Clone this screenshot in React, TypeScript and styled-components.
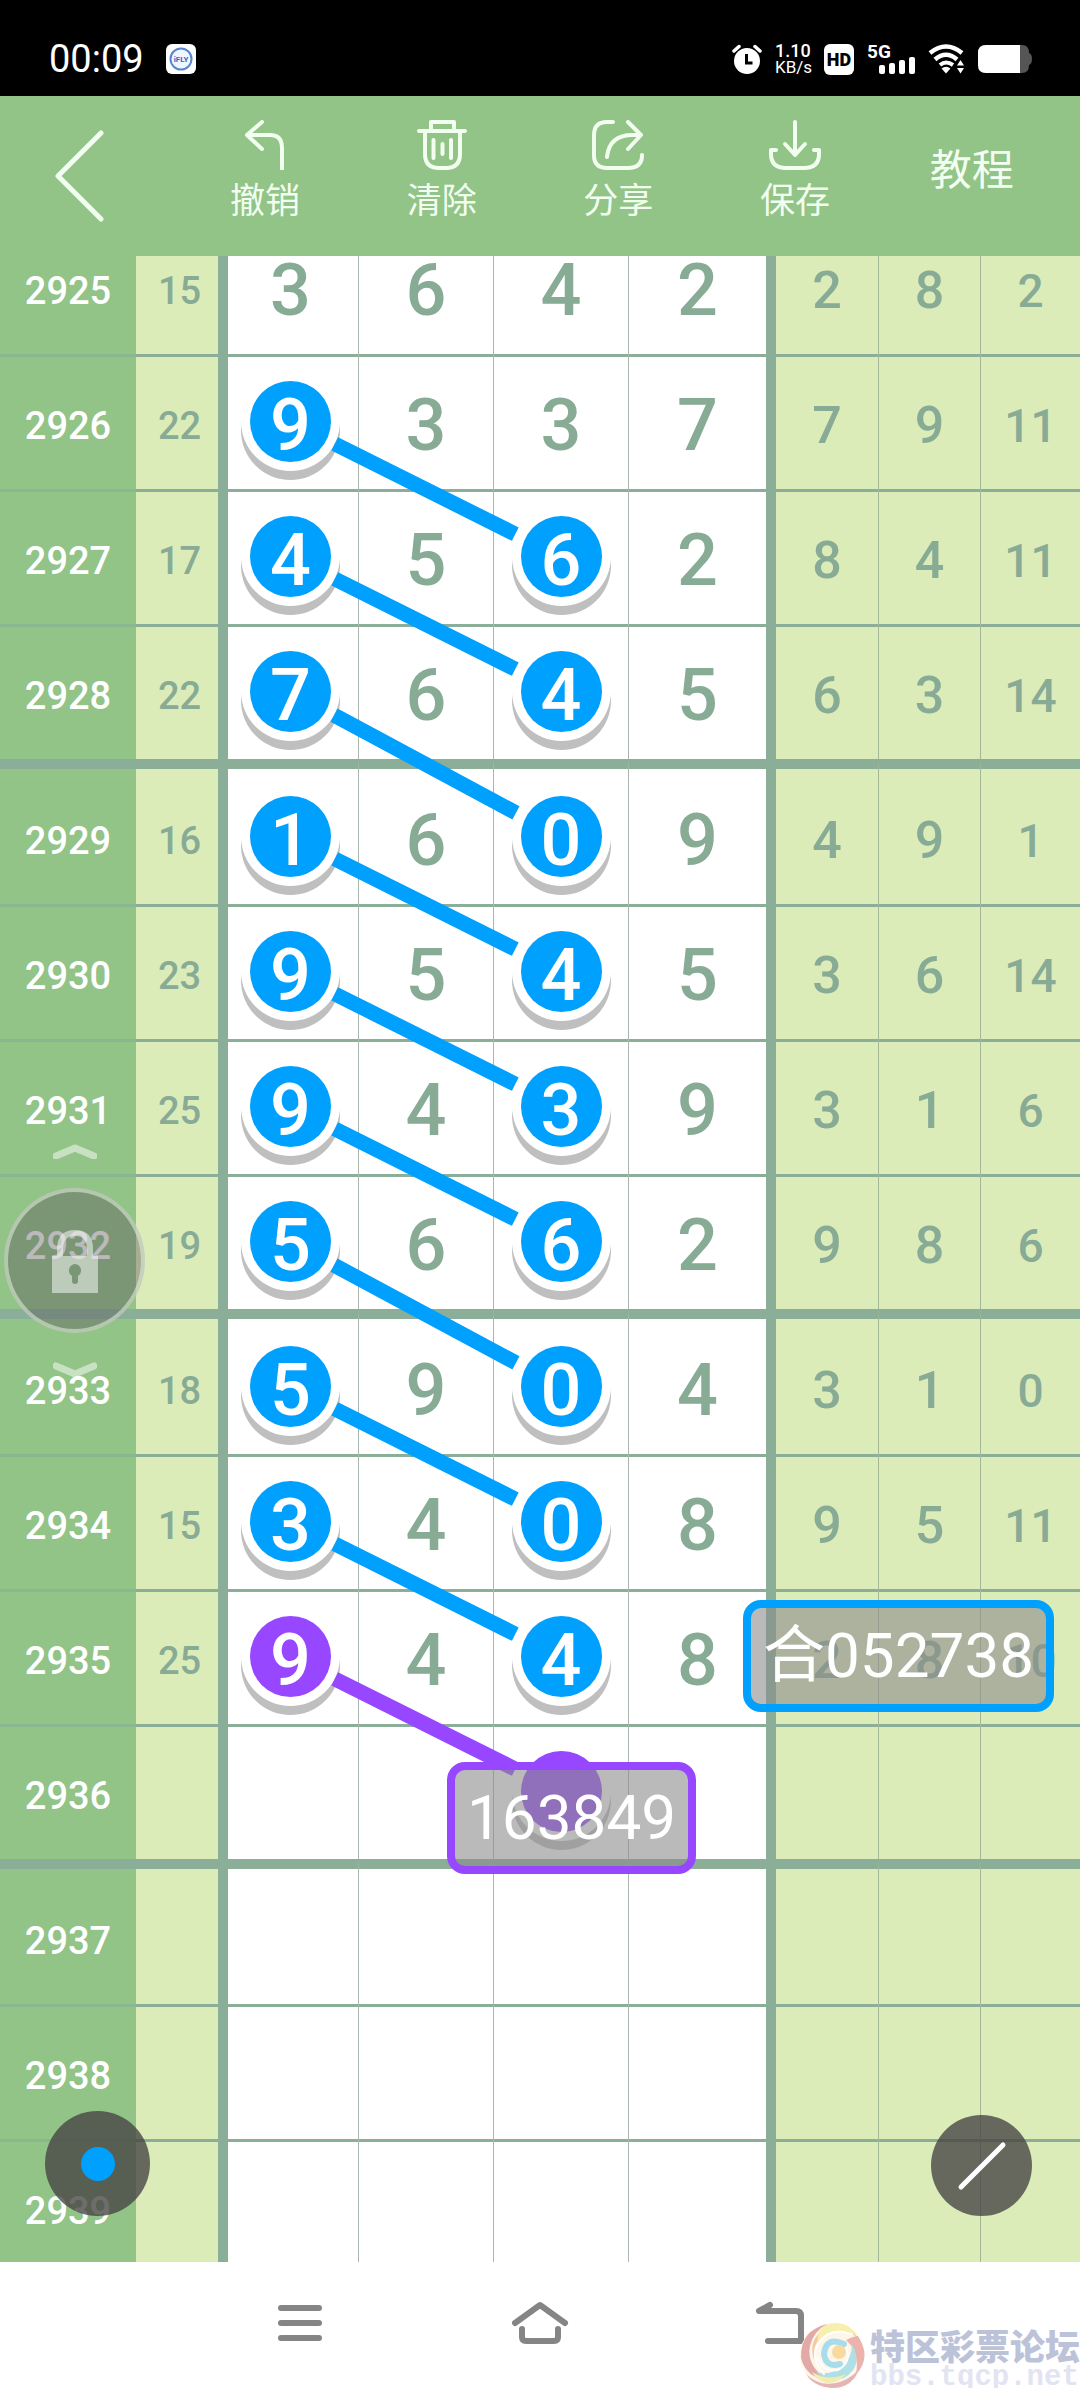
import React, { useLayoutEffect, useRef } from "react";
import styled, { createGlobalStyle, css } from "styled-components";

const BLUE = "#00a0ff";
const PURPLE = "#9747ff";
const LINE = "#8aae98";

const Global = createGlobalStyle`
  *, *::before, *::after { box-sizing: border-box; }
  body {
    margin: 0;
    background: #fff;
    font-family: Roboto, "Noto Sans CJK SC", sans-serif;
  }
  button { border: 0; padding: 0; background: none; font: inherit; color: inherit; }
`;

const Page = styled.div`
  height: 100vh;
  display: flex;
  flex-direction: column;
  overflow: hidden;
`;

/* ---------- status bar ---------- */

const StatusBar = styled.header`
  flex: none;
  height: 96px;
  padding: 22px 48px 0 49px;
  display: flex;
  align-items: center;
  justify-content: space-between;
  background: #000;
  color: #fff;
`;

const StatusSide = styled.div<{ $gap: number }>`
  display: flex;
  align-items: center;
  gap: ${(p) => p.$gap}px;
`;

const Clock = styled.time`
  font-size: 38px;
  line-height: 40px;
`;

const NetSpeed = styled.div`
  width: 36px;
  font-size: 18px;
  font-weight: 500;
  line-height: 17px;

  small {
    display: block;
    font-size: 17px;
    font-weight: 400;
    white-space: nowrap;
  }
`;

const HdBadge = styled.span`
  width: 30px;
  height: 31px;
  display: grid;
  place-items: center;
  border-radius: 6px;
  background: #fff;
  color: #000;
  font-size: 18px;
  font-weight: 900;
`;

const Signal = styled.div`
  width: 48px;
  height: 30px;
  display: grid;
  grid-template-columns: 21px 1fr;
  font-size: 19px;
  font-weight: 700;
  line-height: 16px;

  svg { grid-area: 1 / 1 / 2 / 3; }
  span { grid-area: 1 / 1; }
`;

/* ---------- toolbar ---------- */

const Toolbar = styled.nav`
  flex: none;
  height: 160px;
  padding-right: 20px;
  display: grid;
  grid-template-columns: repeat(6, 1fr);
  background: #92c387;
  color: #f2fff0;
`;

const BackButton = styled.button`
  display: flex;
  align-items: center;
  padding: 0 0 0 54px;
`;

const ToolButton = styled.button`
  display: flex;
  flex-direction: column;
  align-items: center;
  gap: 12px;
  padding-top: 24px;
  font-size: 35px;
  line-height: 40px;
`;

const TextButton = styled.button`
  padding-bottom: 20px;
  font-size: 42px;
`;

const Stroke = styled.svg<{ $w: number }>`
  display: block;
  fill: none;
  stroke: currentColor;
  stroke-width: ${(p) => p.$w};
  stroke-linecap: round;
  stroke-linejoin: round;
`;

/* ---------- trend chart ---------- */

const ChartArea = styled.main`
  flex: 1;
  min-height: 0;
  position: relative;
`;

const Scroller = styled.div`
  height: 100%;
  overflow: hidden auto;
  scrollbar-width: none;
`;

const Canvas = styled.div`
  position: relative;
`;

const Grid = styled.table`
  width: 100%;
  table-layout: fixed;
  border-collapse: separate;
  border-spacing: 0;
  color: #87ab95;
  font-weight: 500;
  text-align: center;
  line-height: 1;
`;

const rowEdge = css<{ $first: boolean }>`
  height: ${(p) => (p.$first ? 145 : 135)}px;
  border-top: ${(p) => (p.$first ? 10 : 0)}px solid ${LINE};
`;

const hair = (first: boolean) => (first ? "inset 0 0 0 0 transparent" : `inset 0 3px 0 ${LINE}`);

const Issue = styled.th<{ $first: boolean }>`
  ${rowEdge}
  padding: 8px 0 0;
  background: #92c387;
  box-shadow: ${(p) => (p.$first ? "none" : "inset 0 3px 0 #8bb790")};
  color: #fff;
  font-size: 38px;
  font-weight: 500;
`;

const Sum = styled.td<{ $first: boolean }>`
  ${rowEdge}
  padding: 8px 0 0;
  background: #dcecb9;
  box-shadow: inset -5px 0 0 ${LINE}, ${(p) => hair(p.$first)};
  font-size: 38px;
`;

const Digit = styled.td<{ $first: boolean; $edge?: "start" | "end"; $ball: boolean }>`
  ${rowEdge}
  padding: ${(p) => (p.$ball ? 0 : 8)}px 0 0;
  background: #fff;
  border-left: ${(p) => (p.$edge === "start" ? 0 : 1)}px solid #a9b8ae;
  border-right: ${(p) => (p.$edge === "end" ? 5 : 0)}px solid ${LINE};
  box-shadow: ${(p) => (p.$edge === "start" ? `inset 5px 0 0 ${LINE}, ` : "")}${(p) => hair(p.$first)};
  font-size: 72px;
`;

const Stat = styled.td<{ $first: boolean; $edge?: "start"; $size: number }>`
  ${rowEdge}
  padding: 8px 0 0;
  background: #dcecb9;
  border-left: ${(p) => (p.$edge === "start" ? 5 : 1)}px solid ${(p) => (p.$edge === "start" ? LINE : "#a3b896")};
  box-shadow: ${(p) => hair(p.$first)};
  font-size: ${(p) => p.$size}px;
`;

const Ball = styled.span<{ $color: string }>`
  width: 81px;
  height: 81px;
  margin: 0 auto;
  padding-top: 9px;
  display: flex;
  align-items: center;
  justify-content: center;
  border-radius: 50%;
  background: ${(p) => p.$color};
  box-shadow: 0 0 0 9px #fff, 0 9px 0 9px #c0bfbf;
  color: #fff;
`;

const Links = styled.svg`
  position: absolute;
  inset: 0;
  width: 100%;
  height: 100%;
  pointer-events: none;
`;

const Note = styled.div<{ $color: string; $x: number; $y: number }>`
  position: absolute;
  left: calc(100% * ${(p) => p.$x} / 1080);
  top: ${(p) => p.$y}px;
  padding: 12px;
  border: 8px solid ${(p) => p.$color};
  border-radius: 18px;
  background: rgba(140, 140, 140, 0.6);
  color: #fff;
  font-size: 62px;
  line-height: 72px;
  white-space: nowrap;
`;

/* ---------- floating controls ---------- */

const LockPad = styled.div`
  position: absolute;
  left: 4px;
  bottom: 885px;
  width: 141px;
  display: flex;
  flex-direction: column;
  align-items: center;
  gap: 29px;
  color: rgba(255, 255, 255, 0.5);
`;

const LockButton = styled.button`
  width: 141px;
  height: 145px;
  display: flex;
  align-items: center;
  justify-content: center;
  border: 4px solid rgba(220, 235, 215, 0.6);
  border-radius: 50%;
  background: rgba(92, 88, 92, 0.42);
`;

const Fab = styled.button<{ $side: "left" | "right"; $size: number }>`
  position: absolute;
  ${(p) => p.$side}: ${(p) => (p.$side === "left" ? 45 : 48)}px;
  bottom: 46px;
  width: ${(p) => p.$size}px;
  height: ${(p) => p.$size}px;
  display: flex;
  align-items: center;
  justify-content: center;
  border-radius: 50%;
  background: rgba(70, 66, 66, 0.78);
  color: #fff;
`;

const Dot = styled.span`
  width: 34px;
  height: 34px;
  border-radius: 50%;
  background: ${BLUE};
`;

/* ---------- system navigation ---------- */

const SystemNav = styled.footer`
  flex: none;
  position: relative;
  height: 126px;
  padding: 0 calc(100% / 6) 4px;
  display: grid;
  grid-template-columns: repeat(3, 1fr);
  background: #fff;
  color: #858585;
`;

const NavButton = styled.button`
  display: flex;
  align-items: center;
  justify-content: center;
`;

const Watermark = styled.div`
  position: absolute;
  right: 0;
  bottom: 0;
  display: flex;
  align-items: flex-end;
  gap: 4px;
  color: #bcc3d9;
`;

const ForumName = styled.div`
  font-size: 35px;
  font-weight: 900;
  line-height: 38px;
  white-space: nowrap;
`;

const ForumUrl = styled.div`
  color: #e2e3f3;
  font-family: "Liberation Mono", monospace;
  font-size: 29px;
  font-weight: 700;
  line-height: 20px;
`;

/* ---------- data ---------- */

type Row = {
  issue: number;
  sum?: number;
  digits?: number[];
  stats?: number[];
  marks?: Record<number, string>;
};

const both = { 0: BLUE, 2: BLUE };

const rows: Row[] = [
  { issue: 2925, sum: 15, digits: [3, 6, 4, 2], stats: [2, 8, 2] },
  { issue: 2926, sum: 22, digits: [9, 3, 3, 7], stats: [7, 9, 11], marks: { 0: BLUE } },
  { issue: 2927, sum: 17, digits: [4, 5, 6, 2], stats: [8, 4, 11], marks: both },
  { issue: 2928, sum: 22, digits: [7, 6, 4, 5], stats: [6, 3, 14], marks: both },
  { issue: 2929, sum: 16, digits: [1, 6, 0, 9], stats: [4, 9, 1], marks: both },
  { issue: 2930, sum: 23, digits: [9, 5, 4, 5], stats: [3, 6, 14], marks: both },
  { issue: 2931, sum: 25, digits: [9, 4, 3, 9], stats: [3, 1, 6], marks: both },
  { issue: 2932, sum: 19, digits: [5, 6, 6, 2], stats: [9, 8, 6], marks: both },
  { issue: 2933, sum: 18, digits: [5, 9, 0, 4], stats: [3, 1, 0], marks: both },
  { issue: 2934, sum: 15, digits: [3, 4, 0, 8], stats: [9, 5, 11], marks: both },
  { issue: 2935, sum: 25, digits: [9, 4, 4, 8], stats: [2, 8, 10], marks: { 0: PURPLE, 2: BLUE } },
  { issue: 2936, marks: { 2: PURPLE } },
  { issue: 2937 },
  { issue: 2938 },
  { issue: 2939 },
];

const columns = [136, 87, 135, 135, 135, 143, 107, 102, 100];
const ROW = 135;
const GROUP_BAR = 10;
const HEIGHT = rows.length * ROW + Math.ceil(rows.length / 4) * GROUP_BAR;

const centerY = (i: number) => i * ROW + (Math.floor(i / 4) + 1) * GROUP_BAR + ROW / 2;

// Each marked first digit is tied to the third digit of the next draw.
const links = rows.slice(0, -1).flatMap((row, i) => {
  const color = row.marks?.[0];
  if (!color) return [];
  const from = { x: 290, y: centerY(i) };
  const to = { x: 560, y: centerY(i + 1) };
  const len = Math.hypot(to.x - from.x, to.y - from.y);
  const ux = ((to.x - from.x) / len) * 50;
  const uy = ((to.y - from.y) / len) * 50;
  return [{ color, x1: from.x + ux, y1: from.y + uy, x2: to.x - ux, y2: to.y - uy }];
});

/* ---------- parts ---------- */

function StatusIcons() {
  return (
    <StatusSide $gap={13}>
      <svg width="30" height="30" viewBox="0 0 30 30" aria-label="闹钟">
        <circle cx="15" cy="17" r="13" fill="#fff" />
        <path d="M2 7 7 2.500M28 7 23 2.500" stroke="#fff" strokeWidth="3.500" strokeLinecap="round" />
        <path d="M14.500 10v9h6" stroke="#000" strokeWidth="3" fill="none" />
      </svg>
      <NetSpeed>
        1.10<small>KB/s</small>
      </NetSpeed>
      <HdBadge>HD</HdBadge>
      <Signal>
        <span>5G</span>
        <svg width="48" height="30" viewBox="0 0 48 30" fill="#fff" aria-hidden="true">
          <rect x="12" y="21" width="6" height="9" rx="2" />
          <rect x="22" y="19" width="6" height="11" rx="2" />
          <rect x="32" y="16" width="6" height="14" rx="2" />
          <rect x="42" y="13" width="6" height="17" rx="2" />
        </svg>
      </Signal>
      <svg width="37" height="30" viewBox="0 0 37 30" fill="none" stroke="#fff" aria-label="Wi-Fi">
        <path d="M2 9Q18 -4 34 9" strokeWidth="4.500" />
        <path d="M7 15.500Q18 6 29 15.500" strokeWidth="4.500" />
        <path d="M12 21Q18 16 25 21" strokeWidth="4" />
        <path d="M13.500 24.500Q18 21 22.500 24.500L18 29.500z" fill="#fff" stroke="none" />
        <path d="M29 21.500 32.500 16 36 21.500zM29 24 32.500 29.500 36 24z" fill="#fff" stroke="none" />
      </svg>
      <svg width="54" height="28" viewBox="0 0 54 28" aria-label="电量">
        <path d="M8 0H44Q51 0 51 8Q54 9 54 14Q54 19 51 20Q51 28 44 28H8Q0 28 0 20V8Q0 0 8 0z" fill="#555" />
        <path d="M8 0H42V28H8Q0 28 0 20V8Q0 0 8 0z" fill="#fff" />
      </svg>
    </StatusSide>
  );
}

function Tools() {
  return (
    <Toolbar>
      <BackButton aria-label="返回">
        <Stroke $w={5} width="50" height="92" viewBox="0 0 50 92">
          <path d="M47 3 4 46 47 89" />
        </Stroke>
      </BackButton>
      <ToolButton>
        <Stroke $w={4} width="50" height="50" viewBox="0 0 50 50">
          <path d="M22 2 7 15 22 29M7 15H30Q42 15 42 28V49" />
        </Stroke>
        撤销
      </ToolButton>
      <ToolButton>
        <Stroke $w={4} width="50" height="50" viewBox="0 0 50 50">
          <path d="M2 11H48M14 11V2H37V11M8 11V34Q8 48 22 48H29Q43 48 43 34V11M16.500 20V38M25.500 24V34M34 20V38" />
        </Stroke>
        清除
      </ToolButton>
      <ToolButton>
        <Stroke $w={4} width="52" height="50" viewBox="0 0 52 50">
          <path d="M21 2H15Q2 2 2 15V35Q2 48 15 48H36Q50 48 50 35M15 37Q17 15 41 15H49M36 2 49 15 36 29" />
        </Stroke>
        分享
      </ToolButton>
      <ToolButton>
        <Stroke $w={4} width="52" height="50" viewBox="0 0 52 50">
          <path d="M26 2V34M16 24 26 35 36 24M7 30H2V34Q2 48 17 48H35Q50 48 50 34V30H45" />
        </Stroke>
        保存
      </ToolButton>
      <TextButton>教程</TextButton>
    </Toolbar>
  );
}

function TrendRow({ row, first }: { row: Row; first: boolean }) {
  return (
    <tr>
      <Issue scope="row" $first={first}>{row.issue}</Issue>
      <Sum $first={first}>{row.sum}</Sum>
      {[0, 1, 2, 3].map((i) => {
        const mark = row.marks?.[i];
        return (
          <Digit
            key={i}
            $first={first}
            $ball={Boolean(mark)}
            $edge={i === 0 ? "start" : i === 3 ? "end" : undefined}
          >
            {mark ? <Ball $color={mark}>{row.digits?.[i]}</Ball> : row.digits?.[i]}
          </Digit>
        );
      })}
      {[0, 1, 2].map((i) => (
        <Stat key={i} $first={first} $edge={i === 0 ? "start" : undefined} $size={i === 2 ? 46 : 52}>
          {row.stats?.[i]}
        </Stat>
      ))}
    </tr>
  );
}

export default function App() {
  const scroller = useRef<HTMLDivElement>(null);

  useLayoutEffect(() => {
    if (scroller.current) scroller.current.scrollTop = 47;
  }, []);

  return (
    <Page>
      <Global />
      <StatusBar>
        <StatusSide $gap={22}>
          <Clock>00:09</Clock>
          <svg width="30" height="30" viewBox="0 0 30 30" aria-label="iFLY">
            <rect width="30" height="30" rx="6" fill="#fff" />
            <circle cx="15" cy="15" r="10.500" fill="#eef6ff" stroke="#5b86cf" strokeWidth="2" />
            <text x="15" y="18" textAnchor="middle" fontSize="8" fontWeight="700" fill="#3f63c4">iFLY</text>
          </svg>
        </StatusSide>
        <StatusIcons />
      </StatusBar>

      <Tools />

      <ChartArea>
        <Scroller ref={scroller}>
          <Canvas>
            <Grid>
              <colgroup>
                {columns.map((w, i) => (
                  <col key={i} style={{ width: w }} />
                ))}
              </colgroup>
              <tbody>
                {rows.map((row, i) => (
                  <TrendRow key={row.issue} row={row} first={i % 4 === 0} />
                ))}
              </tbody>
            </Grid>
            <Links viewBox={`0 0 1080 ${HEIGHT}`} preserveAspectRatio="none" aria-hidden="true">
              {links.map(({ color, ...line }, i) => (
                <line key={i} {...line} stroke={color} strokeWidth="15" />
              ))}
            </Links>
            <Note $color={BLUE} $x={743} $y={1391}>合052738</Note>
            <Note $color={PURPLE} $x={447} $y={1553}>163849</Note>
          </Canvas>
        </Scroller>

        <LockPad>
          <Stroke $w={7} width="44" height="15" viewBox="0 0 44 15">
            <path d="M3 12 22 4 41 12" />
          </Stroke>
          <LockButton aria-label="锁定">
            <svg width="46" height="64" viewBox="0 0 46 64">
              <path d="M8 27V20Q8 4 23 4Q38 4 38 20V27" fill="none" stroke="currentColor" strokeWidth="6" />
              <path
                fillRule="evenodd"
                fill="currentColor"
                d="M0 27H46V64H0zM23 35A6.500 6.500 0 0 0 20 47V52Q20 55 23 55Q26 55 26 52V47A6.500 6.500 0 0 0 23 35z"
              />
            </svg>
          </LockButton>
          <Stroke $w={7} width="44" height="15" viewBox="0 0 44 15">
            <path d="M3 4 22 12 41 4" />
          </Stroke>
        </LockPad>

        <Fab $side="left" $size={105} aria-label="颜色">
          <Dot />
        </Fab>
        <Fab $side="right" $size={101} aria-label="画线">
          <Stroke $w={5} width="50" height="50" viewBox="0 0 50 50">
            <path d="M4 46 46 4" />
          </Stroke>
        </Fab>
      </ChartArea>

      <SystemNav>
        <NavButton aria-label="菜单">
          <Stroke $w={6} width="46" height="38" viewBox="0 0 46 38">
            <path d="M4 4H42M4 19H42M4 34H42" />
          </Stroke>
        </NavButton>
        <NavButton aria-label="主页">
          <Stroke $w={6} width="58" height="44" viewBox="0 0 58 44">
            <path d="M4 22 29 4 54 22M11 28V36Q11 40 15 40H43Q47 40 47 36V28" />
          </Stroke>
        </NavButton>
        <NavButton aria-label="返回">
          <Stroke $w={6} width="50" height="44" viewBox="0 0 50 44">
            <path d="M15 4 4 10H41Q46 10 46 15V40H13" />
          </Stroke>
        </NavButton>
        <Watermark>
          <svg width="68" height="66" viewBox="0 0 68 66" fill="none" strokeLinecap="round" aria-hidden="true">
            <circle cx="34" cy="33" r="32" fill="#fff6ea" />
            <path d="M30 2Q2 8 3 36Q8 56 30 58Q8 44 12 24Q16 8 30 2z" fill="#e3a9a9" />
            <path d="M24 8Q44 -6 60 16Q42 2 22 16Q12 28 18 42Q8 22 24 8z" fill="#f6c9a4" />
            <path d="M28 3Q48 -4 60 14Q48 6 36 10Q24 14 20 22Q18 8 28 3z" fill="#f7f0ac" />
            <path d="M60 14Q74 36 58 52Q62 30 48 18Q56 14 60 14z" fill="#ecb3ac" />
            <path d="M54 22Q66 44 46 56Q30 62 18 50Q34 54 44 44Q54 36 54 22z" fill="#aee0e6" />
            <path d="M8 52Q22 66 42 60Q58 54 62 44Q56 66 34 66Q16 65 8 52z" fill="#e5b4b4" />
            <path d="M14 50Q30 60 48 52Q40 62 28 61Q18 58 14 50z" fill="#f3ecaf" />
            <path d="M46 22Q28 14 26 32Q28 46 42 42" stroke="#a7dcec" strokeWidth="6" />
            <path d="M48 26Q54 40 40 48Q24 50 20 36" stroke="#fff" strokeWidth="2" />
            <path d="M54 12Q32 4 20 22Q12 38 26 52" stroke="#fff" strokeWidth="2" />
            <circle cx="41" cy="30" r="7" fill="#f8d9a0" />
          </svg>
          <div>
            <ForumName>特区彩票论坛</ForumName>
            <ForumUrl>bbs.tqcp.net</ForumUrl>
          </div>
        </Watermark>
      </SystemNav>
    </Page>
  );
}
